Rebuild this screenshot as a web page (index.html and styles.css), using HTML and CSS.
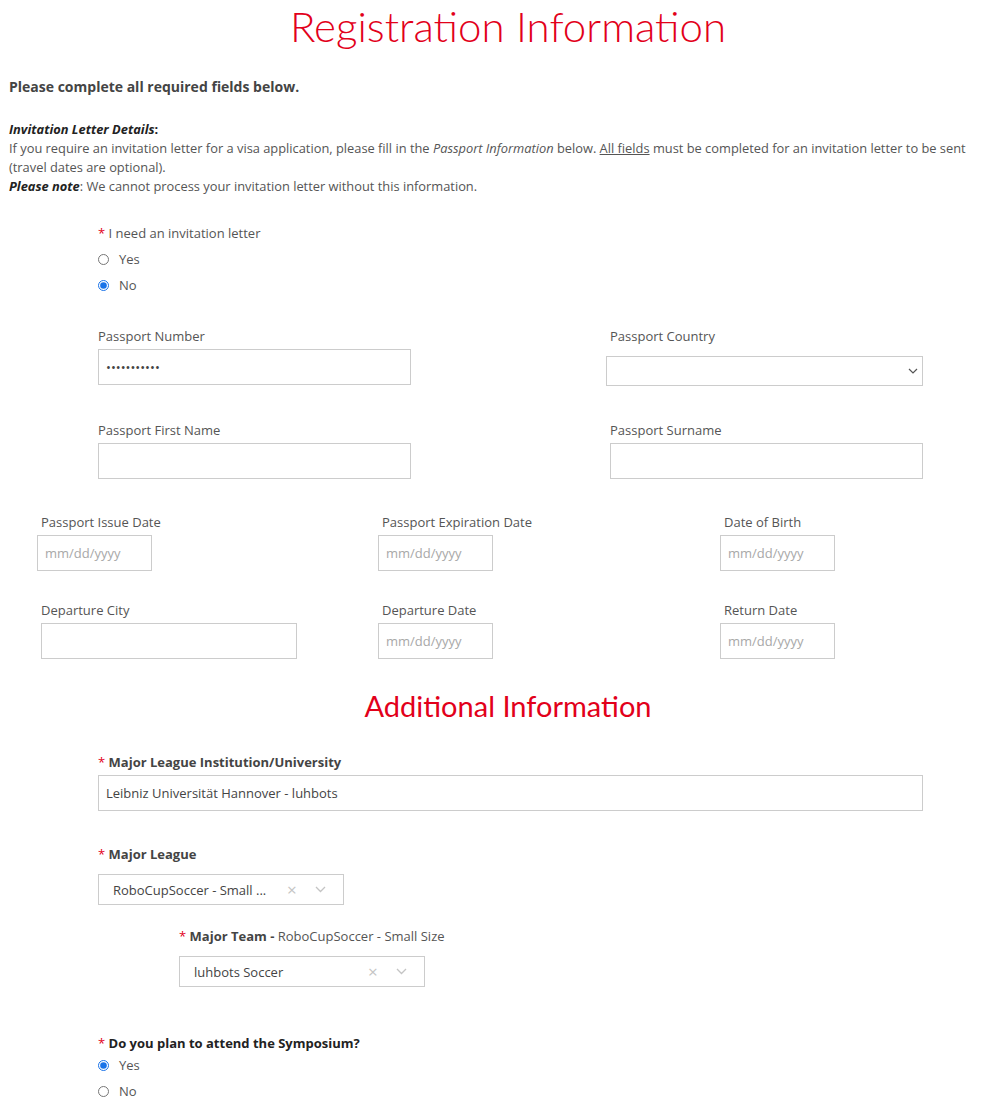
FILE: index.html
```html
<!DOCTYPE html>
<html>
<head>
<meta charset="utf-8">
<title>Registration Information</title>
<link rel="stylesheet" href="styles.css">
</head>
<body>
<div class="page">
  <h1 class="title">Registration Information</h1>
  <p class="lead">Please complete all required fields below.</p>
  <div class="intro">
    <div><b><i>Invitation Letter Details</i>:</b></div>
    <div>If you require an invitation letter for a visa application, please fill in the <i>Passport Information</i> below. <u>All fields</u> must be completed for an invitation letter to be sent (travel dates are optional).</div>
    <div><b><i>Please note</i></b>: We cannot process your invitation letter without this information.</div>
  </div>

  <div class="radio-group first">
    <div class="q"><span class="req">*</span> I need an invitation letter</div>
    <label class="radio-row"><input type="radio" name="inv"><span>Yes</span></label>
    <label class="radio-row"><input type="radio" name="inv" checked><span>No</span></label>
  </div>

  <div class="row2 r-passport">
    <div class="field">
      <div class="lbl">Passport Number</div>
      <input class="txt w312" type="password" value="12345678901">
    </div>
    <div class="field">
      <div class="lbl">Passport Country</div>
      <div class="select country">
        <svg class="chev" width="10" height="6" viewBox="0 0 10 6"><path d="M1 1l4 4 4-4" fill="none" stroke="#555" stroke-width="1.2"/></svg>
      </div>
    </div>
  </div>

  <div class="row2 r-names">
    <div class="field">
      <div class="lbl">Passport First Name</div>
      <input class="txt w312" type="text">
    </div>
    <div class="field">
      <div class="lbl">Passport Surname</div>
      <input class="txt w312" type="text">
    </div>
  </div>

  <div class="row3 r-dates">
    <div class="field">
      <div class="lbl">Passport Issue Date</div>
      <input class="txt date shift" type="text" placeholder="mm/dd/yyyy">
    </div>
    <div class="field">
      <div class="lbl">Passport Expiration Date</div>
      <input class="txt date shift" type="text" placeholder="mm/dd/yyyy">
    </div>
    <div class="field">
      <div class="lbl">Date of Birth</div>
      <input class="txt date shift" type="text" placeholder="mm/dd/yyyy">
    </div>
  </div>

  <div class="row3 r-travel">
    <div class="field">
      <div class="lbl">Departure City</div>
      <input class="txt city" type="text">
    </div>
    <div class="field">
      <div class="lbl">Departure Date</div>
      <input class="txt date shift" type="text" placeholder="mm/dd/yyyy">
    </div>
    <div class="field">
      <div class="lbl">Return Date</div>
      <input class="txt date shift" type="text" placeholder="mm/dd/yyyy">
    </div>
  </div>

  <h2 class="subtitle">Additional Information</h2>

  <div class="block r-inst">
    <div class="lbl strong"><span class="req">*</span> Major League Institution/University</div>
    <input class="txt wide" type="text" value="Leibniz Universität Hannover - luhbots">
  </div>

  <div class="block r-league">
    <div class="lbl strong"><span class="req">*</span> Major League</div>
    <div class="combo">
      <span class="combo-val">RoboCupSoccer - Small ...</span>
      <span class="combo-x">×</span>
      <svg class="combo-chev" width="11" height="7" viewBox="0 0 11 7"><path d="M1 1l4.5 4.5L10 1" fill="none" stroke="#c4c4c4" stroke-width="1.3"/></svg>
    </div>
  </div>

  <div class="block r-team">
    <div class="lbl strong"><span class="req">*</span> Major Team - <span class="normal">RoboCupSoccer - Small Size</span></div>
    <div class="combo">
      <span class="combo-val">luhbots Soccer</span>
      <span class="combo-x">×</span>
      <svg class="combo-chev" width="11" height="7" viewBox="0 0 11 7"><path d="M1 1l4.5 4.5L10 1" fill="none" stroke="#c4c4c4" stroke-width="1.3"/></svg>
    </div>
  </div>

  <div class="radio-group symp">
    <div class="q dark"><span class="req">*</span> Do you plan to attend the Symposium?</div>
    <label class="radio-row"><input type="radio" name="sym" checked><span>Yes</span></label>
    <label class="radio-row"><input type="radio" name="sym"><span>No</span></label>
  </div>
</div>
</body>
</html>
```

FILE: styles.css
```css
html, body {
  margin: 0;
  padding: 0;
  background: #fff;
}
body {
  font-family: "Open Sans", "Liberation Sans", sans-serif;
  font-size: 13px;
  color: #555;
  overflow-x: hidden;
}
.page {
  width: 982px;
}
.title {
  margin: 0;
  padding-left: 34px;
  text-align: center;
  font-family: "Lato", "Liberation Sans", sans-serif;
  font-weight: 300;
  font-size: 42px;
  line-height: 52px;
  color: #e2001a;
}
.lead {
  margin: 25px 0 0 9px;
  font-size: 14px;
  font-weight: 700;
  line-height: 20px;
  color: #444;
}
.intro {
  margin: 23px 0 0 9px;
  line-height: 19px;
  font-size: 12.85px;
  color: #555;
}
.intro b {
  color: #222;
}
.req {
  color: #e2001a;
  font-weight: 400;
}
.radio-group {
  margin-left: 98px;
}
.radio-group.first {
  margin-top: 27px;
}
.q {
  line-height: 20px;
  font-size: 13px;
  margin-bottom: 3px;
}
.q.dark {
  color: #222;
  font-weight: 700;
  line-height: 18px;
  margin-bottom: 0;
}
.radio-row {
  display: flex;
  align-items: center;
  height: 26px;
}
.radio-row input {
  margin: 0 10px 0 0;
  width: 11px;
  height: 11px;
  accent-color: #1a73e8;
}
.radio-row span {
  font-size: 13px;
  color: #555;
}
.row2 {
  display: grid;
  grid-template-columns: 512px 312px;
  margin-left: 98px;
}
.row3 {
  display: grid;
  grid-template-columns: 341px 342px 200px;
  margin-left: 41px;
}
.r-passport { margin-top: 28px; }
.r-names { margin-top: 34px; }
.r-dates { margin-top: 33px; }
.r-travel { margin-top: 29px; }
.lbl {
  line-height: 20px;
  margin-bottom: 3px;
  font-size: 13px;
  color: #555;
}
.lbl.strong {
  font-weight: 700;
  color: #444;
}
.lbl .normal {
  font-weight: 400;
  color: #555;
}
.txt {
  display: block;
  box-sizing: border-box;
  height: 36px;
  border: 1px solid #ccc;
  border-radius: 0;
  padding: 0 7px;
  font-family: "Open Sans", "Liberation Sans", sans-serif;
  font-size: 13px;
  color: #444;
  background: #fff;
  outline: none;
}
.txt::placeholder {
  color: #a8a8a8;
}
.w312 { width: 313px; }
.date { width: 115px; }
.shift { margin-left: -4px; }
.city { width: 256px; }
.wide { width: 825px; }
.select.country {
  box-sizing: border-box;
  margin-top: 10px;
  margin-left: -4px;
  width: 317px;
  height: 30px;
  border: 1px solid #ccc;
  display: flex;
  align-items: center;
  justify-content: flex-end;
  padding-right: 4px;
}
.subtitle {
  margin: 29px 0 0 0;
  padding-left: 34px;
  text-align: center;
  font-family: "Lato", "Liberation Sans", sans-serif;
  font-weight: 400;
  font-size: 29px;
  line-height: 36px;
  color: #e2001a;
}
.block {
  margin-left: 98px;
}
.r-inst { margin-top: 28px; }
.r-league { margin-top: 33px; }
.r-team { margin-top: 21px; margin-left: 179px; }
.r-league .lbl, .r-team .lbl { margin-bottom: 10px; }
.combo {
  box-sizing: border-box;
  width: 246px;
  height: 31px;
  border: 1px solid #ccc;
  display: flex;
  align-items: center;
  padding-left: 14px;
}
.combo-val {
  flex: 1;
  font-size: 13px;
  color: #444;
}
.combo-x {
  color: #c4c4c4;
  font-size: 17px;
  width: 28px;
}
.combo-chev {
  margin-right: 17px;
}
.radio-group.symp {
  margin-top: 47px;
}
```
